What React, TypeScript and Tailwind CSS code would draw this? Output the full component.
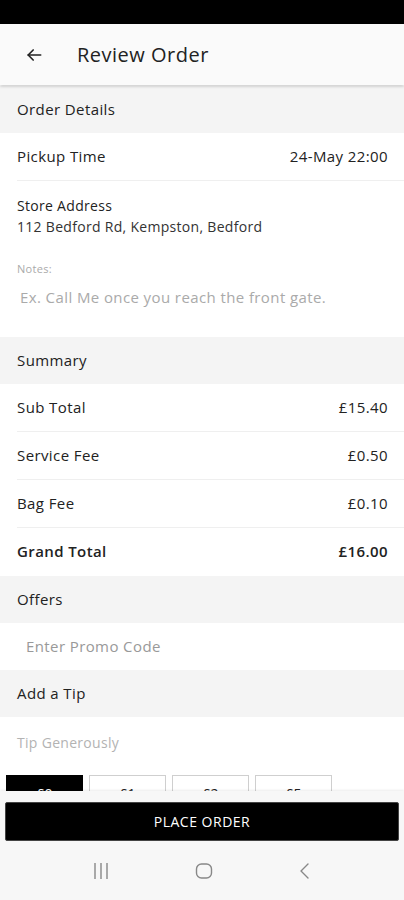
import React from "react";

const font = { fontFamily: "'Open Sans', Lato, sans-serif" };

function SectionHeader({ title }: { title: string }) {
  return (
    <div className="h-[47px] bg-[#f4f4f4] px-[17px] flex items-center text-[15px] tracking-[0.4px] text-[#222] pb-[1px]">
      {title}
    </div>
  );
}

function Row({
  label,
  value,
  bold,
  divider = true,
}: {
  label: string;
  value: string;
  bold?: boolean;
  divider?: boolean;
}) {
  return (
    <div className="pl-[17px]">
      <div
        className={`h-[48px] flex items-center justify-between pr-[16px] text-[15px] tracking-[0.4px] text-[#222] ${
          divider ? "border-b border-[#efefef]" : ""
        } ${bold ? "font-semibold pb-[2px]" : ""}`}
      >
        <span>{label}</span>
        <span>{value}</span>
      </div>
    </div>
  );
}

export default function App() {
  const tips = ["£0", "£1", "£2", "£5"];

  return (
    <div className="w-[404px] h-[900px] flex flex-col overflow-hidden bg-white" style={font}>
      {/* status bar */}
      <div className="h-[24px] bg-black shrink-0" />

      {/* app bar */}
      <div className="h-[61px] shrink-0 bg-[#fafafa] flex items-center shadow-[0_1px_3px_rgba(0,0,0,0.25)] relative z-10">
        <svg width="20" height="20" viewBox="0 0 24 24" className="ml-[24px] mt-[1px]" fill="none" stroke="#222" strokeWidth="2" strokeLinecap="round" strokeLinejoin="round">
          <path d="M20 12H5" />
          <path d="M11 6l-6 6 6 6" />
        </svg>
        <span className="ml-[33px] text-[20px] tracking-[0.5px] text-[#222] pt-[1px]">Review Order</span>
      </div>

      {/* scroll content */}
      <div className="flex-1 overflow-hidden relative">
        <div className="pt-[1px]">
          <SectionHeader title="Order Details" />
          <Row label="Pickup Time" value="24-May 22:00" />
          <div className="px-[17px] pt-[15px] tracking-[0.3px]">
            <div className="text-[14px] text-[#222] leading-[20px]">Store Address</div>
            <div className="text-[14px] text-[#333] leading-[20px] mt-[1px]">
              112 Bedford Rd, Kempston, Bedford
            </div>
            <div className="text-[11px] text-[#aaa] mt-[25px] leading-[14px]">Notes:</div>
            <div className="text-[15px] text-[#aaa] mt-[11px] pl-[3px] leading-[20px] tracking-[0.4px]">
              Ex. Call Me once you reach the front gate.
            </div>
          </div>
          <div className="h-[30px]" />
          <SectionHeader title="Summary" />
          <Row label="Sub Total" value="£15.40" />
          <Row label="Service Fee" value="£0.50" />
          <Row label="Bag Fee" value="£0.10" />
          <Row label="Grand Total" value="£16.00" bold divider={false} />
          <SectionHeader title="Offers" />
          <div className="h-[47px] flex items-center pl-[26px] text-[15px] tracking-[0.4px] text-[#999]">
            Enter Promo Code
          </div>
          <SectionHeader title="Add a Tip" />
          <div className="h-[50px] flex items-center pl-[17px] text-[14px] tracking-[0.3px] text-[#b3b3b3]">
            Tip Generously
          </div>
          <div className="flex gap-[6px] pl-[6px] mt-[8px]">
            {tips.map((t, i) => (
              <div
                key={t}
                className={`w-[77px] h-[36px] flex items-center justify-center text-[14px] ${
                  i === 0 ? "bg-black text-white" : "border border-[#cfcfcf] text-[#222]"
                }`}
              >
                {t}
              </div>
            ))}
          </div>
        </div>
      </div>

      {/* bottom */}
      <div className="shrink-0 bg-[#f7f7f7] shadow-[0_-1px_2px_rgba(0,0,0,0.08)] relative z-10">
        <div className="px-[5px] pt-[11px]">
          <button className="w-full h-[39px] bg-black text-white text-[14px] tracking-[0.5px] rounded-[2px] border border-[#444]">
            PLACE ORDER
          </button>
        </div>
        <div className="h-[59px] flex items-center justify-around px-[50px]">
          <svg width="18" height="18" viewBox="0 0 18 18" fill="none" stroke="#888" strokeWidth="1.4">
            <path d="M3 1v16M9 1v16M15 1v16" />
          </svg>
          <svg width="18" height="18" viewBox="0 0 18 18" fill="none" stroke="#888" strokeWidth="1.4">
            <rect x="1.5" y="2" width="15" height="14" rx="5" />
          </svg>
          <svg width="14" height="18" viewBox="0 0 14 18" fill="none" stroke="#888" strokeWidth="1.4" strokeLinecap="round" strokeLinejoin="round">
            <path d="M10 2L3 9l7 7" />
          </svg>
        </div>
      </div>
    </div>
  );
}
